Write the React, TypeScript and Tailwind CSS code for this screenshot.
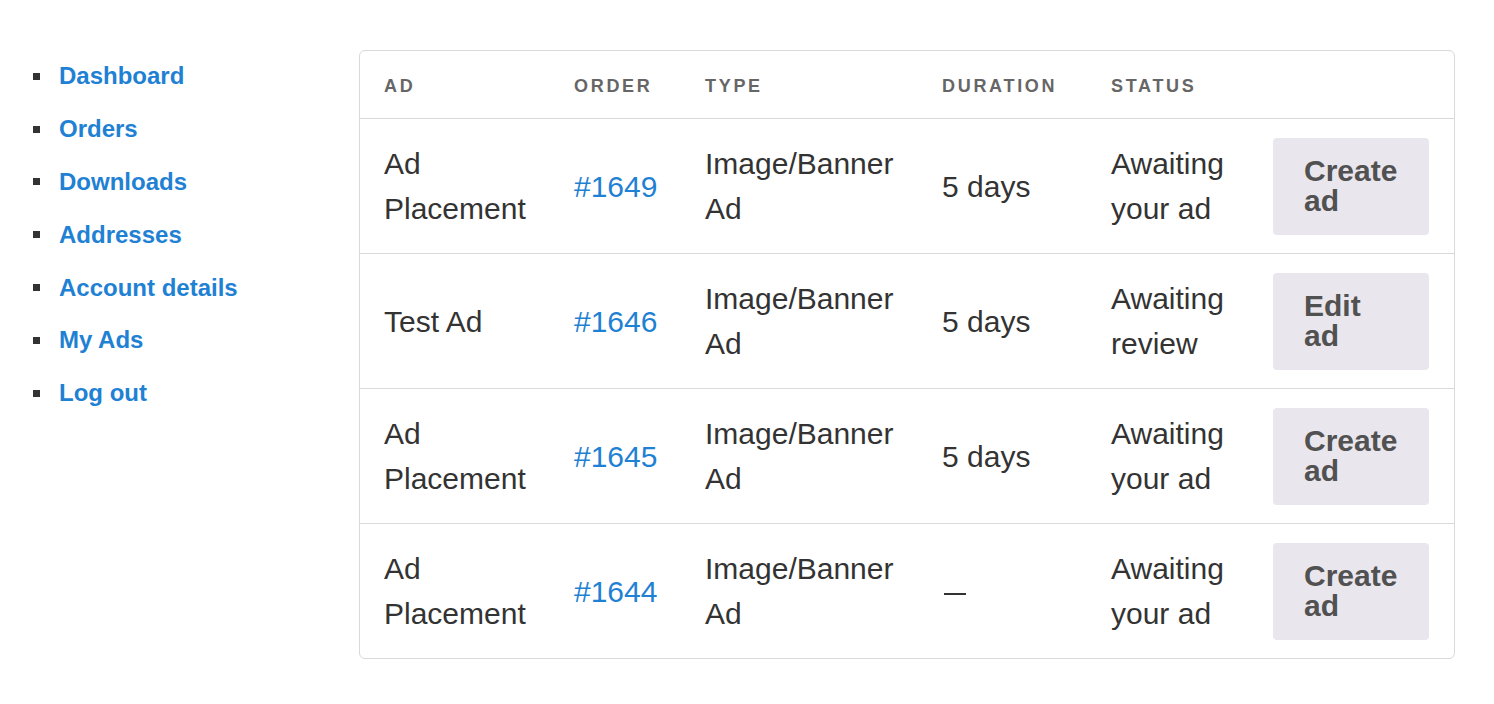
import React from "react";

const navItems = [
  "Dashboard",
  "Orders",
  "Downloads",
  "Addresses",
  "Account details",
  "My Ads",
  "Log out",
];

type AdRow = {
  name: string;
  order: string;
  type: string;
  duration: string;
  status: string;
  action: string;
};

const rows: AdRow[] = [
  { name: "Ad Placement", order: "#1649", type: "Image/Banner Ad", duration: "5 days", status: "Awaiting your ad", action: "Create ad" },
  { name: "Test Ad", order: "#1646", type: "Image/Banner Ad", duration: "5 days", status: "Awaiting review", action: "Edit ad" },
  { name: "Ad Placement", order: "#1645", type: "Image/Banner Ad", duration: "5 days", status: "Awaiting your ad", action: "Create ad" },
  { name: "Ad Placement", order: "#1644", type: "Image/Banner Ad", duration: "", status: "Awaiting your ad", action: "Create ad" },
];

const App: React.FC = () => {
  return (
    <div
      className="min-h-screen bg-white pt-[50px] pl-[33px] flex items-start"
      style={{ fontFamily: '"Liberation Sans", Arial, sans-serif' }}
    >
      {/* Sidebar */}
      <nav className="w-[326px] shrink-0">
        <ul>
          {navItems.map((item) => (
            <li key={item} className="flex items-center h-[52.8px]">
              <span className="w-[7px] h-[7px] bg-[#333333] mr-[19px]" />
              <a href="#" className="text-[24px] font-bold text-[#1f81d3]">
                {item}
              </a>
            </li>
          ))}
        </ul>
      </nav>

      {/* Table */}
      <div className="w-[1096px] border border-[#d9d9d9] rounded-[6px] text-[#333333]">
        <div className="flex items-center h-[67px] pt-[3px] px-[24px] gap-[24px] text-[18px] font-bold tracking-[0.15em] text-[#666666] uppercase">
          <div className="w-[166px]">Ad</div>
          <div className="w-[107px]">Order</div>
          <div className="w-[213px]">Type</div>
          <div className="w-[145px]">Duration</div>
          <div className="w-[138px]">Status</div>
          <div className="w-[156px]" />
        </div>
        {rows.map((row) => (
          <div
            key={row.order}
            className="flex items-center h-[135px] border-t border-[#d9d9d9] px-[24px] gap-[24px] text-[30px] leading-[45px]"
          >
            <div className="w-[166px]">{row.name}</div>
            <div className="w-[107px]">
              <a href="#" className="text-[#1f81d3]">
                {row.order}
              </a>
            </div>
            <div className="w-[213px]">{row.type}</div>
            <div className="w-[145px]">
              {row.duration || (
                <span className="block w-[22px] h-[2px] ml-[2px] mt-[6px] bg-[#333333]" />
              )}
            </div>
            <div className="w-[138px]">{row.status}</div>
            <button className="w-[156px] h-[97px] rounded-[4px] bg-[#e9e6ed] px-[31px] text-left text-[30px] leading-[30px] font-bold text-[#515151]">
              {row.action}
            </button>
          </div>
        ))}
      </div>
    </div>
  );
};

export default App;
